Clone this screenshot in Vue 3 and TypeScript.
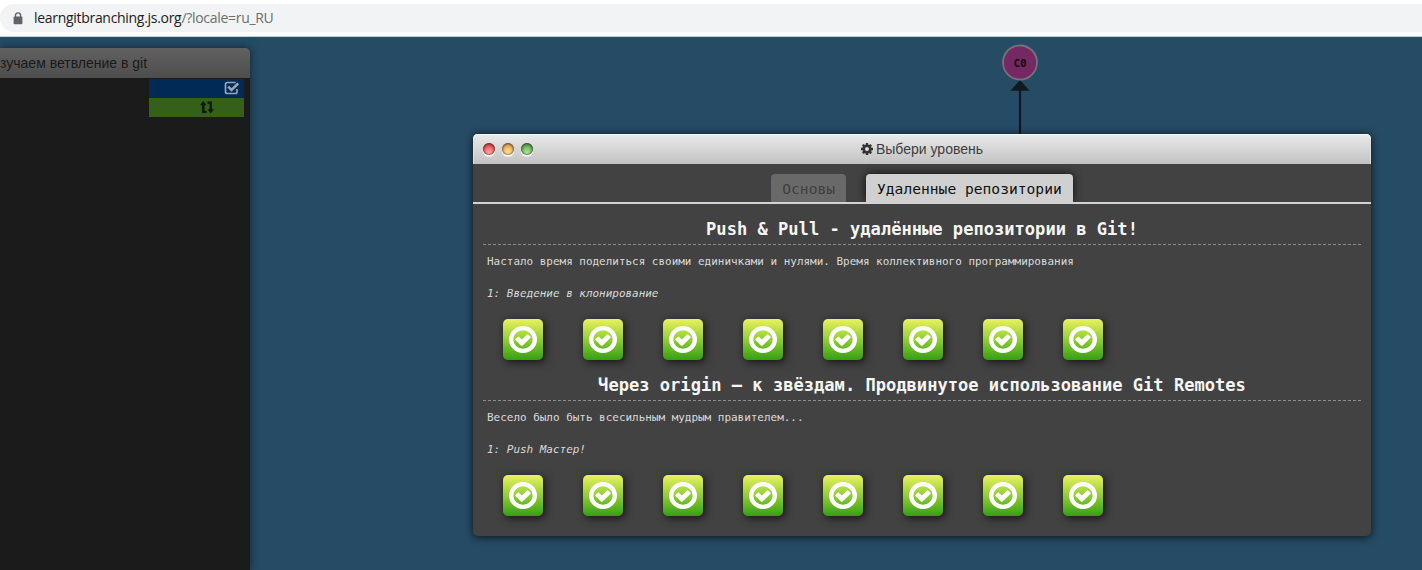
<script setup lang="ts">
interface Sequence {
  title: string
  about: string
  name: string
  levels: number
}

const sequences: Sequence[] = [
  {
    title: 'Push & Pull - удалённые репозитории в Git!',
    about: 'Настало время поделиться своими единичками и нулями. Время коллективного программирования',
    name: '1: Введение в клонирование',
    levels: 8,
  },
  {
    title: 'Через origin – к звёздам. Продвинутое использование Git Remotes',
    about: 'Весело было быть всесильным мудрым правителем...',
    name: '1: Push Мастер!',
    levels: 8,
  },
]
const lights = ['red', 'amber', 'green']
</script>

<template>
  <div class="page">
    <header class="toolbar">
      <div class="omnibox">
        <svg class="lock" width="10" height="13" viewBox="0 0 10 13">
          <path d="M2.500 5.500V3.300a2.500 2.400 0 0 1 5 0v2.200" fill="none" stroke="#5f6368" stroke-width="1.400" />
          <rect x="0.600" y="4.600" width="8.800" height="7.600" rx="1" fill="#5f6368" />
        </svg>
        <span class="url"><b>learngitbranching.js.org</b>/?locale=ru_RU</span>
      </div>
    </header>

    <main class="stage">
      <aside class="terminal">
        <div class="terminal-head">зучаем ветвление в git</div>
        <div class="terminal-body">
          <div class="row blue">
            <svg width="16" height="14" viewBox="0 0 16 14" fill="none" stroke="#9aa5b0">
              <path d="M13 8v2.700a1.800 1.800 0 0 1-1.800 1.800H3.300a1.800 1.800 0 0 1-1.800-1.800V3.300a1.800 1.800 0 0 1 1.800-1.800h8.400" stroke-width="1.700" />
              <path d="M4.200 5.700l3.300 3.300 6.700-6.500" stroke-width="2.500" />
            </svg>
          </div>
          <div class="row lime">
            <svg width="14" height="13" viewBox="0 0 14 13" fill="#0e1a08">
              <path d="M3.300 0L6.600 4.300H4.500v5.400h2.100V12H2.100V4.300H0z" />
              <path d="M10.700 12.500L7.400 8.200h2.100V2.800H7.400V.5h4.500v7.700H14z" />
            </svg>
          </div>
        </div>
      </aside>

      <svg class="tree" width="40" height="100" viewBox="0 0 40 100">
        <path d="M20 50V100" stroke="#11191e" stroke-width="2.200" />
        <path d="M20 43l9.500 10.800h-19z" fill="#11191e" />
        <circle cx="20" cy="25.500" r="17" fill="#752963" stroke="#77717b" stroke-width="1.800" />
        <text x="20" y="29.500" text-anchor="middle">C0</text>
      </svg>

      <section class="window">
        <div class="window-head">
          <div class="lights"><i v-for="l in lights" :key="l" :class="l"></i></div>
          <div class="caption">
            <svg width="14" height="14" viewBox="0 0 1792 1792" fill="#333">
              <path d="M1152 896q0-106-75-181t-181-75-181 75-75 181 75 181 181 75 181-75 75-181zm512-109v222q0 12-8 23t-20 13l-185 28q-19 54-39 91 35 50 107 138 10 12 10 25t-9 23q-27 37-99 108t-94 71q-12 0-26-9l-138-108q-44 23-91 38-16 136-29 186-7 28-36 28h-222q-14 0-24.500-8.500t-11.500-21.500l-28-184q-49-16-90-37l-141 107q-10 9-25 9-14 0-25-11-126-114-165-168-7-10-7-23 0-12 8-23 15-21 51-66.500t54-70.500q-27-50-41-99l-183-27q-13-2-21-12.500t-8-23.500v-222q0-12 8-23t19-13l186-28q14-46 39-92-40-57-107-138-10-12-10-24 0-10 9-23 26-36 98.500-107.500t94.500-71.500q13 0 26 10l138 107q44-23 91-38 16-136 29-186 7-28 36-28h222q14 0 24.500 8.500t11.500 21.500l28 184q49 16 90 37l142-107q9-9 24-9 13 0 25 10 129 119 165 170 7 8 7 22 0 12-8 23-15 21-51 66.500t-54 70.500q26 50 41 98l183 28q13 2 21 12.500t8 23.500z" />
            </svg>
            <span>Выбери уровень</span>
          </div>
        </div>
        <nav class="tabs">
          <div class="tab">Основы</div>
          <div class="tab active">Удаленные репозитории</div>
        </nav>
        <div class="content">
          <article v-for="s in sequences" :key="s.title">
            <h3>{{ s.title }}</h3>
            <p class="about">{{ s.about }}</p>
            <p class="name">{{ s.name }}</p>
            <div class="levels">
              <div v-for="n in s.levels" :key="n" class="level">
                <svg width="28" height="27" viewBox="0 0 1536 1536" preserveAspectRatio="none">
                  <circle cx="768" cy="768" r="650" fill="none" stroke="#fff" stroke-width="236" />
                  <path fill="#fff" d="M1171 685l-422 422q-19 19-45 19t-45-19l-294-294q-19-19-19-45t19-45l102-102q19-19 45-19t45 19l147 147 275-275q19-19 45-19t45 19l102 102q19 19 19 45t-19 45z" />
                </svg>
              </div>
            </div>
          </article>
        </div>
      </section>
    </main>
  </div>
</template>

<style>
body { margin: 0; overflow: hidden; }
</style>

<style scoped>
.page { display: flex; flex-direction: column; width: 1422px; height: 570px; overflow: hidden; background: #264b64; }
.toolbar { box-sizing: border-box; flex: none; height: 37px; padding-top: 4px; background: #fff; border-bottom: 1px solid #c9cfd3; }
.omnibox { display: flex; align-items: center; box-sizing: border-box; height: 28px; padding-left: 13px; border-radius: 14px 0 0 14px; background: #f1f3f4; }
.lock { flex: none; margin-right: 11px; }
.url { font: 14px/28px "Open Sans", "Noto Sans", sans-serif; color: #6b6f73; white-space: nowrap; letter-spacing: -0.3px; }
.url b { font-weight: 400; color: #202124; }
.stage { position: relative; flex: 1; display: flex; align-items: flex-start; }

.terminal { flex: none; width: 250px; margin-top: 11px; height: 522px; display: flex; flex-direction: column; border-radius: 0 5px 0 0; box-shadow: 0 0 8px rgba(0, 0, 0, .55); }
.terminal-head { flex: none; height: 30px; border-radius: 0 5px 0 0; background: linear-gradient(#626162, #4d4d4d); font: 14px/30px "Liberation Sans", Arial, sans-serif; color: #191919; white-space: nowrap; }
.terminal-body { flex: 1; padding: 1px 6px 0 149px; background: #1b1b1b; }
.row { box-sizing: border-box; height: 19px; display: flex; align-items: center; }
.blue { background: #012a57; justify-content: flex-end; padding: 0 4px 1px 0; }
.lime { background: #35601a; padding-left: 51px; }

.tree { position: absolute; left: 1000px; top: 0; }
.tree text { font: bold 11px "DejaVu Sans Mono", monospace; fill: #160812; }

.window { position: absolute; left: 473px; top: 97px; width: 898px; height: 402px; display: flex; flex-direction: column; border-radius: 5px; background: #424242; box-shadow: 0 1px 9px rgba(0, 0, 0, .75); }
.window-head { position: relative; flex: none; box-sizing: border-box; height: 30px; display: flex; align-items: center; justify-content: center; border-radius: 5px 5px 0 0; background: linear-gradient(#ebeaeb, #c3c2c3); box-shadow: inset 0 1px 0 #f5f9fb, inset -1px 0 0 #d7e0e5, inset 1px 0 0 #d7e0e5; }
.lights { position: absolute; left: 10px; top: 9px; display: flex; gap: 7px; }
.lights i { width: 12px; height: 12px; border-radius: 50%; box-shadow: inset 0 1px 3px rgba(0, 0, 0, .6), inset 0 0 1px 1px rgba(60, 30, 20, .25), 0 2px 1px rgba(255, 255, 255, .85); }
.red { background: radial-gradient(circle at 50% 85%, #ffb0a8, #f05a5a 60%); }
.amber { background: radial-gradient(circle at 50% 85%, #ffe3a0, #efb560 60%); }
.green { background: radial-gradient(circle at 50% 85%, #b7e8a0, #6db45e 60%); }
.caption { display: flex; align-items: center; gap: 2px; padding-right: 1px; font: 14px/30px "Liberation Sans", Arial, sans-serif; color: #3d3d3d; }

.tabs { flex: none; box-sizing: border-box; height: 40px; padding-top: 10px; display: flex; justify-content: center; gap: 20px; border-bottom: 2px solid #d3d3d3; font: 14.620px/30px "DejaVu Sans Mono", monospace; }
.tab { box-sizing: border-box; height: 28px; padding: 0 11px; border-radius: 4px 4px 0 0; background: #696969; color: #3f3f3f; white-space: nowrap; }
.active { background: #d0d0d0; color: #111; box-shadow: 0 0 10px rgba(0, 0, 0, .8); clip-path: inset(-12px -12px 0 -12px); }

.content { flex: 1; padding: 9px 10px 0; font-family: "DejaVu Sans Mono", monospace; color: #dadada; }
article { height: 156px; }
h3 { margin: 0; height: 31px; border-bottom: 1px dashed #8c8c8c; font-size: 17.090px; line-height: 32px; text-align: center; color: #f5f5f5; white-space: nowrap; }
p { margin: 0; padding-left: 4px; height: 32px; font-size: 10.960px; line-height: 33px; white-space: nowrap; }
.name { font-style: italic; }
.levels { display: flex; gap: 40px; padding: 10px 20px 0; }
.level { width: 40px; height: 41px; display: flex; align-items: center; justify-content: center; border-radius: 5px; background: linear-gradient(#eaf25f, #9ad13a 45%, #35a012); box-shadow: 2px 2px 8px rgba(0, 0, 0, .7); }
</style>
